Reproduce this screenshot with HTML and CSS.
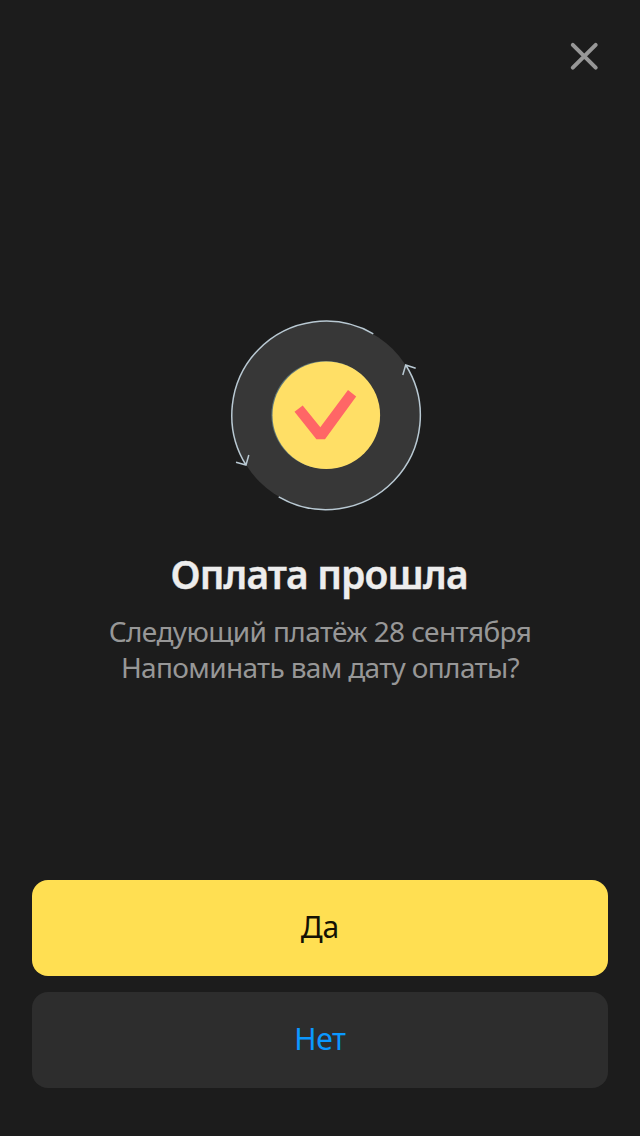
FILE: index.html
```html
<!DOCTYPE html>
<html lang="ru">
<head>
<meta charset="utf-8">
<title>Оплата прошла</title>
<link rel="stylesheet" href="styles.css">
</head>
<body>
<main class="screen">
  <header class="header">
    <button class="close" aria-label="Закрыть">
      <svg width="48" height="48" viewBox="0 0 48 48"><path d="M12.8 12.8 35.7 35.7M35.7 12.8 12.8 35.7" fill="none" stroke="#979797" stroke-width="4" stroke-linecap="round"/></svg>
    </button>
  </header>
  <section class="result">
    <svg class="art" width="212" height="212" viewBox="220 310 212 212">
      <circle cx="326" cy="415.3" r="94" fill="#373737"/>
      <g fill="none" stroke="#b9c9d3" stroke-width="1.5">
        <path d="M373.3 333.8A94.2 94.2 0 0 0 246 465M236 462.2 246 465 248.8 455"/>
        <path d="M278.7 496.8A94.2 94.2 0 0 0 405.7 365M415.7 368.2 405.7 365 402.8 375"/>
      </g>
      <circle cx="325.4" cy="414.9" r="54" fill="#5f7779"/>
      <circle cx="326.3" cy="415.2" r="53.8" fill="#ffdf66"/>
      <path d="M294.5 411.7 302.7 405.5 320.3 427.2 348 390 356.2 396.5 325 439.2H316.4Z" fill="#ff6666"/>
    </svg>
    <h1 class="title">Оплата прошла</h1>
    <p class="details"><span class="next">Следующий платёж 28 сентября</span><br><span class="ask">Напоминать вам дату оплаты?</span></p>
  </section>
  <footer class="actions">
    <button class="btn yes">Да</button>
    <button class="btn no">Нет</button>
  </footer>
</main>
</body>
</html>
```
FILE: styles.css
```css
* { box-sizing: border-box; }
body { margin: 0; background: #1c1c1c; font-family: "Noto Sans", "Liberation Sans", sans-serif; }
button { padding: 0; border: 0; background: none; font: inherit; }
.screen { height: 1136px; display: flex; flex-direction: column; padding: 32px 32px 48px; overflow: hidden; }
.header { display: flex; justify-content: flex-end; }
.close, .close svg { display: block; width: 48px; height: 48px; }
.result { flex: 1; padding-top: 230px; display: flex; flex-direction: column; align-items: center; text-align: center; }
.art { display: block; margin-left: 12px; }
.title { margin: 26px 0 0; font-size: 39px; line-height: 52px; font-weight: 600; color: #ededed; letter-spacing: -0.85px; text-indent: -1.8px; -webkit-text-stroke: 0.4px #ededed; white-space: nowrap; }
.details { margin: 13px 0 0; font-size: 28px; line-height: 36px; color: #979797; white-space: nowrap; }
.next { letter-spacing: -0.6px; }
.ask { letter-spacing: -0.65px; }
.actions { display: flex; flex-direction: column; gap: 16px; }
.btn { height: 96px; padding-bottom: 2px; border-radius: 16px; font-size: 30px; line-height: 40px; }
.yes { background: #ffdf52; color: #141204; }
.no { background: #2d2d2d; color: #0b98ff; letter-spacing: -0.3px; }
```
